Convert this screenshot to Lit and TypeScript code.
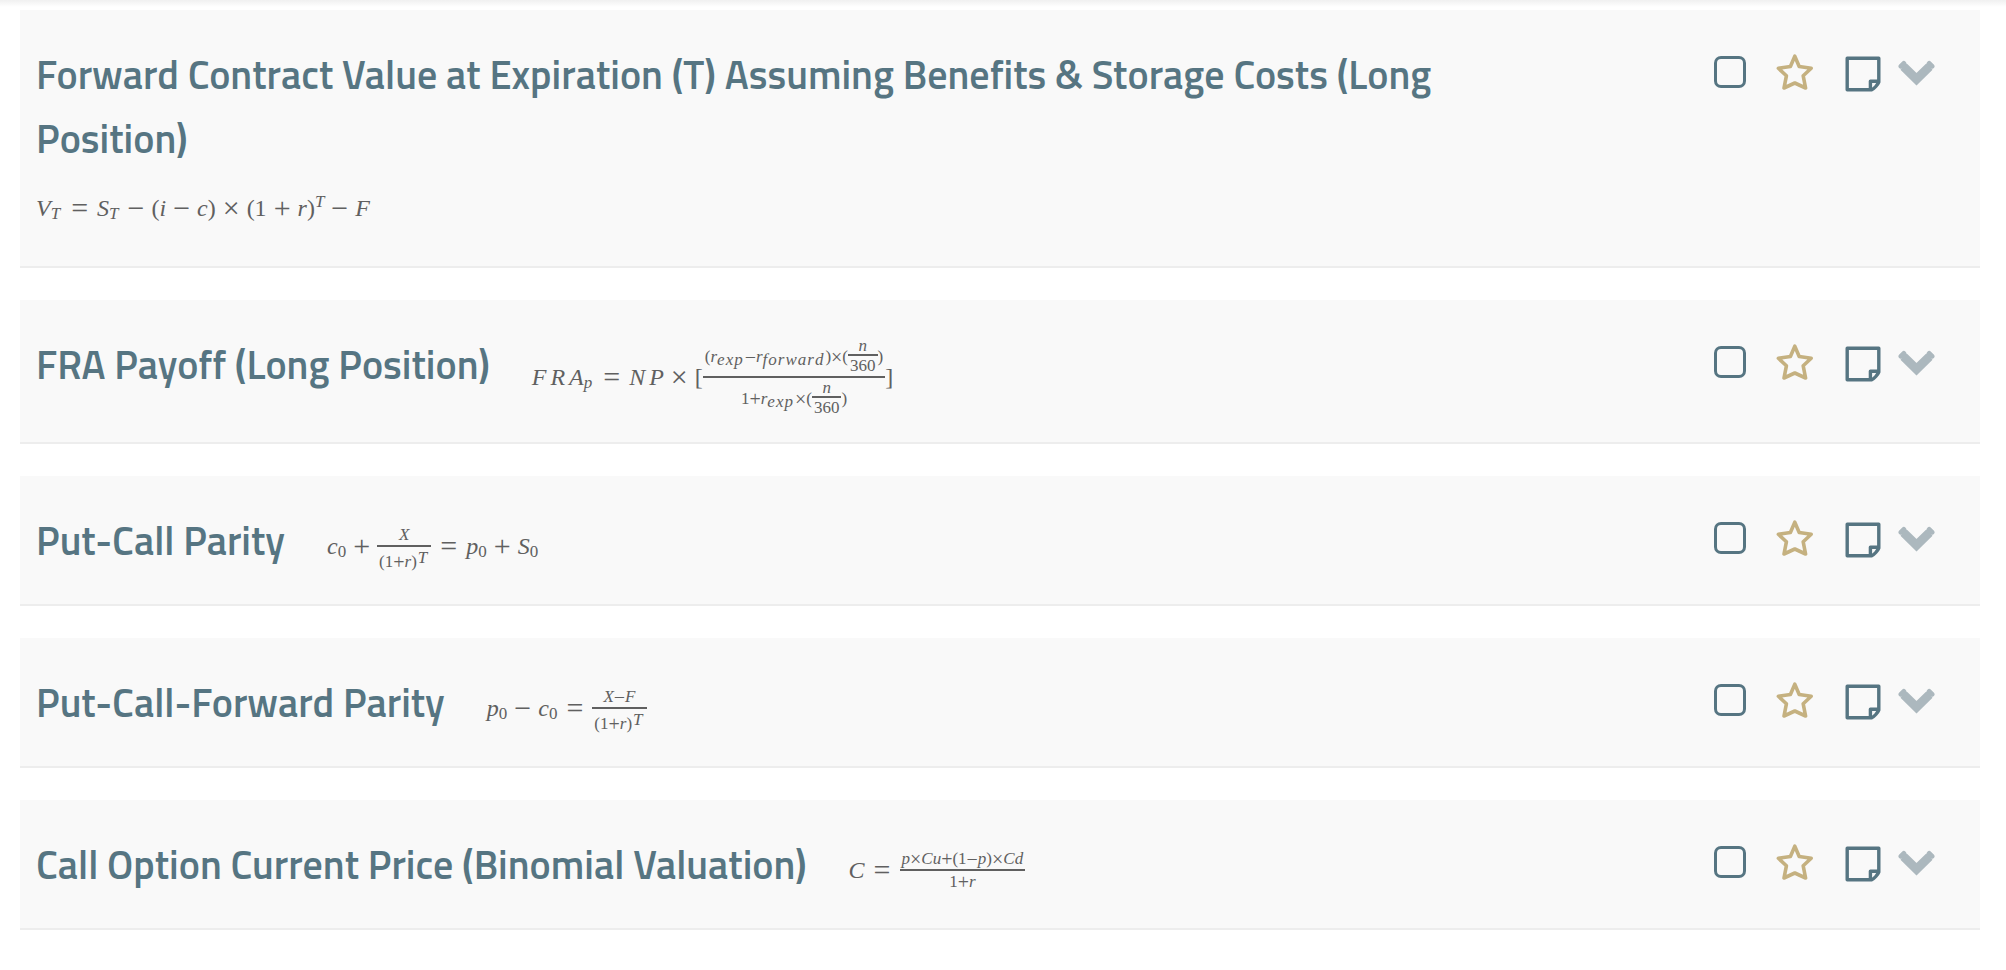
import { LitElement, html, css, svg, TemplateResult } from "lit";
import { customElement, property, state } from "lit/decorators.js";

type Part = TemplateResult | string;

/* Small builders for inline maths. */
const v = (letters: string) =>
  html`<span class="var">${[...letters].map((c) => html`<i>${c}</i>`)}</span>`;
const n = (text: string) => html`<span>${text}</span>`;
const rel = (text: string) => html`<span class="op rel">${text}</span>`;
const bin = (text: string) => html`<span class="op bin">${text}</span>`;
const sub = (...parts: Part[]) => html`<span class="script sub">${parts}</span>`;
const sup = (...parts: Part[]) => html`<span class="script sup">${parts}</span>`;
const frac = (top: Part[], bottom: Part[]) => html`<span class="frac">
  <span class="num">${top}</span><span class="bar"></span><span class="den">${bottom}</span>
</span>`;

interface Formula {
  title: string;
  body: Part[];
}

const days = () => frac([v("n")], [n("360")]);

const formulas: Formula[] = [
  {
    title:
      "Forward Contract Value at Expiration (T) Assuming Benefits & Storage Costs (Long Position)",
    body: [
      v("V"), sub(v("T")), rel("="), v("S"), sub(v("T")), bin("−"),
      n("("), v("i"), bin("−"), v("c"), n(")"), bin("×"),
      n("(1"), bin("+"), v("r"), n(")"), sup(v("T")), bin("−"), v("F"),
    ],
  },
  {
    title: "FRA Payoff (Long Position)",
    body: [
      v("FRA"), sub(v("p")), rel("="), v("NP"), bin("×"), n("["),
      frac(
        [n("("), v("r"), sub(v("exp")), bin("−"), v("r"), sub(v("forward")), n(")"), bin("×"), n("("), days(), n(")")],
        [n("1"), bin("+"), v("r"), sub(v("exp")), bin("×"), n("("), days(), n(")")],
      ),
      n("]"),
    ],
  },
  {
    title: "Put-Call Parity",
    body: [
      v("c"), sub(n("0")), bin("+"),
      frac([v("X")], [n("("), n("1"), bin("+"), v("r"), n(")"), sup(v("T"))]),
      rel("="), v("p"), sub(n("0")), bin("+"), v("S"), sub(n("0")),
    ],
  },
  {
    title: "Put-Call-Forward Parity",
    body: [
      v("p"), sub(n("0")), bin("−"), v("c"), sub(n("0")), rel("="),
      frac([v("X"), bin("−"), v("F")], [n("("), n("1"), bin("+"), v("r"), n(")"), sup(v("T"))]),
    ],
  },
  {
    title: "Call Option Current Price (Binomial Valuation)",
    body: [
      v("C"), rel("="),
      frac(
        [v("p"), bin("×"), v("C"), v("u"), bin("+"), n("("), n("1"), bin("−"), v("p"), n(")"), bin("×"), v("C"), v("d")],
        [n("1"), bin("+"), v("r")],
      ),
    ],
  },
];

const starIcon = svg`<path d="M18.8 3.2 L23.2 13.5 L35.2 15.3 L27.2 22.8 L29.6 35 L18.8 30 L8 35 L10.4 22.8 L2.4 15.3 L14.4 13.5 Z"
  fill="none" stroke="currentColor" stroke-width="3.6" stroke-linejoin="round"/>`;
const noteIcon = svg`<path d="M2.2 8.2 H33.8 V32 Q33 34 30.8 36.5 Q28.6 39.1 26.5 39.8 H2.2 Z M25.4 39.5 V31.2 H33.5"
  fill="none" stroke="currentColor" stroke-width="3.4" stroke-linejoin="round"/>`;
const chevronIcon = svg`<path d="M5.6 8.6 L18.5 21.2 L31.4 8.6" fill="none" stroke="currentColor" stroke-width="9"/>
  <path d="M5.8 5.4 L3 8.2 M31.2 5.4 L34 8.2" stroke="currentColor" stroke-width="5" stroke-linecap="round"/>`;

@customElement("formula-card")
export class FormulaCard extends LitElement {
  @property({ attribute: false }) formula!: Formula;
  @state() private starred = false;

  static styles = css`
    :host {
      display: block;
    }
    .card {
      display: flex;
      justify-content: space-between;
      padding: 33px 45px 19px 16px;
      background: #f9f9f9;
      border-bottom: 2px solid #ededed;
    }
    .content {
      display: flex;
      flex-wrap: wrap;
      column-gap: 42px;
      width: 77%;
    }
    .title {
      margin: 0;
      font: 600 40px/64px "Titillium Web", Roboto, sans-serif;
      color: #567582;
    }
    .formula {
      display: flex;
      align-items: center;
      box-sizing: border-box;
      min-height: 76px;
      padding: 4px 0 6px;
      font: 24px/28px "Liberation Serif", serif;
      color: #606060;
      white-space: nowrap;
    }
    .formula span {
      flex: none;
    }
    .var {
      display: flex;
      gap: 4px;
    }
    .op {
      font-size: 30px;
    }
    .rel {
      padding: 0 9px;
    }
    .bin {
      padding: 0 7px;
    }
    .script {
      display: flex;
      font-size: 17px;
      line-height: 18px;
    }
    .script .var {
      gap: 1px;
    }
    .sub {
      padding-top: 12px;
    }
    .sub .var {
      padding-right: 2px;
    }
    .sup {
      padding-bottom: 12px;
    }
    .frac {
      display: grid;
      grid-template-rows: 1fr 2px 1fr;
      font-size: 17px;
      line-height: 18px;
    }
    .bar {
      background: currentColor;
    }
    .num,
    .den {
      display: flex;
      align-items: center;
      justify-content: center;
      padding: 0 2px;
    }
    .num {
      align-self: end;
      padding-bottom: 1px;
    }
    .den {
      align-self: start;
      padding-top: 2px;
    }
    .frac .op {
      padding: 0;
      font-size: 20px;
    }
    .frac .sub {
      padding-top: 6px;
    }
    .frac .sup {
      padding: 0 2px 8px 1px;
    }
    .frac .frac {
      grid-template-rows: auto 2px auto;
    }
    .frac .frac .num {
      padding-bottom: 0;
      line-height: 16px;
    }
    .frac .frac .den {
      padding-top: 1px;
    }
    .actions {
      display: flex;
      align-items: center;
      height: 58px;
    }
    .check {
      appearance: none;
      width: 32px;
      height: 32px;
      margin: 0 30px 0 0;
      border: 3px solid #567582;
      border-radius: 7px;
      cursor: pointer;
    }
    .check:checked {
      background: #567582;
    }
    .icon {
      display: block;
      padding: 0;
      border: 0;
      background: none;
      color: #567582;
      cursor: pointer;
    }
    .icon svg {
      display: block;
    }
    .star {
      margin-right: 31px;
      color: #c5b180;
    }
    .star[aria-pressed="true"] path {
      fill: currentColor;
    }
    .note {
      margin-right: 17px;
    }
    .chevron {
      color: #acb8be;
    }
  `;

  render() {
    const { title, body } = this.formula;
    return html`<article class="card">
      <div class="content">
        <h2 class="title" id="title">${title}</h2>
        <div class="formula">${body}</div>
      </div>
      <div class="actions">
        <input class="check" type="checkbox" aria-labelledby="title" />
        <button
          class="icon star"
          aria-label="Favourite"
          aria-pressed=${this.starred}
          @click=${() => (this.starred = !this.starred)}
        >
          <svg width="38" height="38" viewBox="0 0 38 38">${starIcon}</svg>
        </button>
        <button class="icon note" aria-label="Note">
          <svg width="36" height="44" viewBox="0 0 36 44">${noteIcon}</svg>
        </button>
        <button class="icon chevron" aria-label="Expand">
          <svg width="37" height="28" viewBox="0 0 37 28">${chevronIcon}</svg>
        </button>
      </div>
    </article>`;
  }
}

@customElement("app-root")
export class AppRoot extends LitElement {
  static styles = css`
    :host {
      display: block;
      background: #fff;
    }
    .edge {
      height: 10px;
      background: linear-gradient(#f0f0f0, #fff 7px);
    }
    .list {
      display: flex;
      flex-direction: column;
      gap: 32px;
      padding: 0 26px 32px 20px;
    }
  `;

  render() {
    return html`<div class="edge"></div>
      <main class="list">
        ${formulas.map((f) => html`<formula-card .formula=${f}></formula-card>`)}
      </main>`;
  }
}
